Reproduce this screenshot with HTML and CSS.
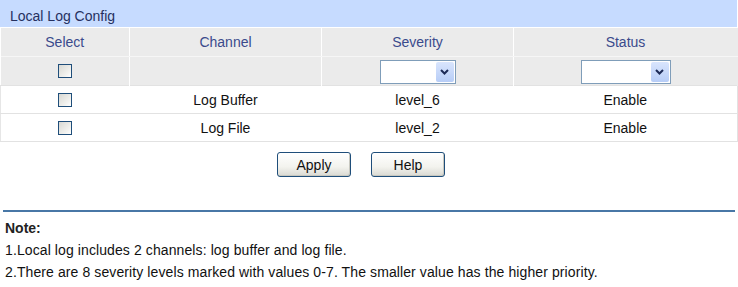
FILE: index.html
```html
<!DOCTYPE html>
<html>
<head>
<meta charset="utf-8">
<link rel="stylesheet" href="styles.css">
</head>
<body>
<div class="page">
  <div class="title">Local Log Config</div>
  <table class="grid">
    <colgroup>
      <col class="c1"><col class="c2"><col class="c3"><col class="c4">
    </colgroup>
    <tr class="head">
      <td>Select</td><td>Channel</td><td>Severity</td><td>Status</td>
    </tr>
    <tr class="filter">
      <td><span class="cb"></span></td>
      <td></td>
      <td><span class="sel sel-sev"><span class="arrow"><svg width="9" height="6" viewBox="0 0 9 6"><path d="M1 1 L4.5 4.5 L8 1" fill="none" stroke="#1d2b57" stroke-width="2"/></svg></span></span></td>
      <td><span class="sel sel-stat"><span class="arrow"><svg width="9" height="6" viewBox="0 0 9 6"><path d="M1 1 L4.5 4.5 L8 1" fill="none" stroke="#1d2b57" stroke-width="2"/></svg></span></span></td>
    </tr>
    <tr class="data">
      <td><span class="cb"></span></td><td>Log Buffer</td><td>level_6</td><td>Enable</td>
    </tr>
    <tr class="data">
      <td><span class="cb"></span></td><td>Log File</td><td>level_2</td><td>Enable</td>
    </tr>
  </table>
  <div class="buttons">
    <button class="btn">Apply</button>
    <button class="btn">Help</button>
  </div>
  <div class="rule"></div>
  <div class="note">
    <div class="note-title">Note:</div>
    <div class="note-line">1.Local log includes 2 channels: log buffer and log file.</div>
    <div class="note-line">2.There are 8 severity levels marked with values 0-7. The smaller value has the higher priority.</div>
  </div>
</div>
</body>
</html>
```

FILE: styles.css
```css
html, body {
  margin: 0;
  padding: 0;
  background: #ffffff;
}
body {
  font-family: "Liberation Sans", Arial, sans-serif;
  font-size: 14px;
  color: #111111;
}
.page {
  width: 737px;
}
.title {
  height: 28px;
  line-height: 28px;
  padding: 2px 0 0 10px;
  box-sizing: border-box;
  background: #c6dbff;
  color: #25305f;
  border-bottom: 1px solid #ffffff;
}
.grid {
  width: 737px;
  border-collapse: collapse;
  table-layout: fixed;
}
.c1 { width: 129px; }
.c2 { width: 192px; }
.c3 { width: 192px; }
.c4 { width: 224px; }
.grid td {
  padding: 0;
  text-align: center;
  vertical-align: middle;
}
.head td {
  height: 28px;
  background: #ebebeb;
  color: #3a4a8c;
  border-right: 1px solid #ffffff;
  border-bottom: 1px solid #f6f6f6;
}
.filter td {
  height: 28px;
  background: #ebebeb;
  border-right: 1px solid #ffffff;
}
.head td:last-child, .filter td:last-child {
  border-right: 1px solid #ebebeb;
}
.data td {
  height: 26px;
  border-bottom: 1px solid #e2e2e2;
  border-top: 1px solid #e2e2e2;
  padding-top: 1px;
}
.data td:first-child { border-left: 1px solid #e6e6e6; }
.data td:last-child { border-right: 1px solid #e2e2e2; }
.cb {
  display: inline-block;
  width: 12px;
  height: 12px;
  border: 1px solid #1f4e7a;
  background: linear-gradient(135deg, #d8d8d3 0%, #f2f2ef 70%, #ffffff 100%);
  vertical-align: middle;
  position: relative;
  top: -1px;
}
.sel {
  display: inline-flex;
  justify-content: flex-end;
  align-items: stretch;
  height: 24px;
  box-sizing: border-box;
  border: 1px solid #7f9db9;
  background: #ffffff;
  padding: 1px;
  vertical-align: middle;
  position: relative;
  top: 1px;
}
.sel-sev { width: 76px; }
.sel-stat { width: 90px; }
.arrow {
  width: 18px;
  display: flex;
  align-items: center;
  justify-content: center;
  background: linear-gradient(180deg, #d9e5fd 0%, #b7cdf7 100%);
  border-radius: 2px;
}
.buttons {
  display: flex;
  gap: 20px;
  padding: 10px 0 0 277px;
}
.btn {
  width: 74px;
  height: 25px;
  font-family: "Liberation Sans", Arial, sans-serif;
  font-size: 14px;
  color: #111111;
  border: 1px solid #1f4e7a;
  border-radius: 3px;
  background: linear-gradient(180deg, #ffffff 0%, #f3f3ee 60%, #d9d9d2 100%);
  box-shadow: inset -1px -1px 0 #c8c8c0;
  padding: 0;
}
.rule {
  margin: 33px 2px 0 3px;
  height: 2px;
  background: #4877a6;
}
.note {
  padding: 7px 0 0 5px;
  color: #111111;
}
.note-title {
  font-weight: bold;
  line-height: 18px;
  color: #222222;
}
.note-line {
  line-height: 23px;
  margin-top: 2px;
  letter-spacing: 0.1px;
}
.note-line + .note-line {
  margin-top: -1px;
}
```
